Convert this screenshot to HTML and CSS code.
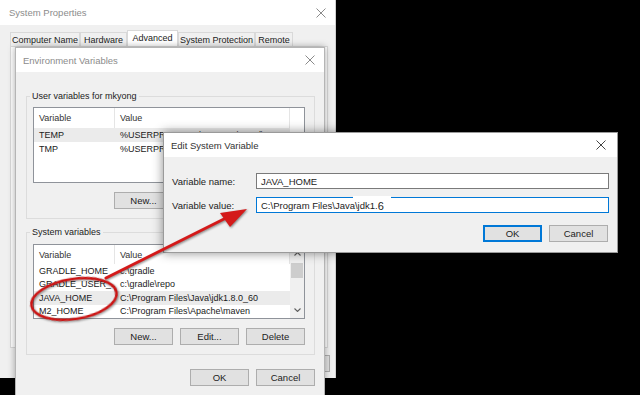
FILE: index.html
```html
<!DOCTYPE html>
<html>
<head>
<meta charset="utf-8">
<link rel="stylesheet" href="styles.css">
</head>
<body>
<div class="desktop">

  <div class="win sysprops">
    <div class="titlebar">
      <span class="title">System Properties</span>
      <svg class="close" width="10" height="10" viewBox="0 0 10 10"><path d="M0.5 0.5 L9.5 9.5 M9.5 0.5 L0.5 9.5" /></svg>
    </div>
    <div class="tabs">
      <div class="tab w-cn">Computer Name</div>
      <div class="tab w-hw">Hardware</div>
      <div class="tab active w-adv">Advanced</div>
      <div class="tab w-sp">System Protection</div>
      <div class="tab w-rm">Remote</div>
    </div>
    <div class="panel"></div>
    <div class="btnrow sp-btns">
      <div class="btn">OK</div>
      <div class="btn">Cancel</div>
      <div class="btn">Apply</div>
    </div>
  </div>

  <div class="win envvars">
    <div class="titlebar">
      <span class="title">Environment Variables</span>
      <svg class="close" width="10" height="10" viewBox="0 0 10 10"><path d="M0.5 0.5 L9.5 9.5 M9.5 0.5 L0.5 9.5" /></svg>
    </div>
    <div class="env-body">
      <fieldset class="group user-group">
        <legend>User variables for mkyong</legend>
        <div class="list">
          <div class="cols">
            <div class="row hdr"><span class="c1">Variable</span><span class="c2">Value</span></div>
            <div class="row sel"><span class="c1">TEMP</span><span class="c2">%USERPROFILE%\AppData\Local\Temp</span></div>
            <div class="row"><span class="c1">TMP</span><span class="c2">%USERPROFILE%\AppData\Local\Temp</span></div>
          </div>
          <div class="gutter"></div>
        </div>
        <div class="btnrow grp-btns">
          <div class="btn">New...</div>
          <div class="btn">Edit...</div>
          <div class="btn">Delete</div>
        </div>
      </fieldset>

      <fieldset class="group sys-group">
        <legend>System variables</legend>
        <div class="list sys-list">
          <div class="cols">
            <div class="row hdr"><span class="c1">Variable</span><span class="c2">Value</span></div>
            <div class="row"><span class="c1">GRADLE_HOME</span><span class="c2">c:\gradle</span></div>
            <div class="row"><span class="c1">GRADLE_USER_...</span><span class="c2">c:\gradle\repo</span></div>
            <div class="row sel"><span class="c1">JAVA_HOME</span><span class="c2">C:\Program Files\Java\jdk1.8.0_60</span></div>
            <div class="row"><span class="c1">M2_HOME</span><span class="c2">C:\Program Files\Apache\maven</span></div>
          </div>
          <div class="scrollbar">
            <div class="sb-arrow"><svg width="7" height="4" viewBox="0 0 7 4"><path d="M0.5 3.5 L3.5 0.5 L6.5 3.5"/></svg></div>
            <div class="sb-thumb"></div>
            <div class="sb-track"></div>
            <div class="sb-arrow"><svg width="7" height="4" viewBox="0 0 7 4"><path d="M0.5 0.5 L3.5 3.5 L6.5 0.5"/></svg></div>
          </div>
        </div>
        <div class="btnrow grp-btns">
          <div class="btn">New...</div>
          <div class="btn">Edit...</div>
          <div class="btn">Delete</div>
        </div>
      </fieldset>

      <div class="btnrow env-btns">
        <div class="btn">OK</div>
        <div class="btn">Cancel</div>
      </div>
    </div>
  </div>

  <div class="win editvar">
    <div class="titlebar">
      <span class="title">Edit System Variable</span>
      <svg class="close" width="10" height="10" viewBox="0 0 10 10"><path d="M0.5 0.5 L9.5 9.5 M9.5 0.5 L0.5 9.5" /></svg>
    </div>
    <div class="edit-body">
      <div class="field-row">
        <span class="lbl">Variable name:</span>
        <div class="field">JAVA_HOME</div>
      </div>
      <div class="field-row">
        <span class="lbl">Variable value:</span>
        <div class="field focused">C:\Program Files\Java\jdk1.<span class="six">6</span></div>
      </div>
      <div class="btnrow edit-btns">
        <div class="btn default">OK</div>
        <div class="btn">Cancel</div>
      </div>
    </div>
  </div>

  <svg class="annot" width="640" height="395" viewBox="0 0 640 395">
    <rect x="353" y="196" width="38" height="4" fill="#ffffff"/>
    <g class="red">
      <ellipse cx="74" cy="299" rx="43" ry="20" transform="rotate(-9 74 299)" fill="none" stroke="#cc1414" stroke-width="2.6"/>
      <path d="M106 278 L228 217" fill="none" stroke="#d41a1a" stroke-width="3" stroke-linecap="round"/>
      <polygon points="247,209 220,213 230,227" fill="#d41a1a"/>
    </g>
  </svg>
</div>
</body>
</html>
```

FILE: styles.css
```css
* { box-sizing: border-box; }
html, body { margin: 0; padding: 0; }
body {
  width: 640px;
  height: 395px;
  overflow: hidden;
  background: #000;
  font-family: "Liberation Sans", Arial, sans-serif;
  font-size: 9px;
  color: #1a1a1a;
}
.desktop { position: relative; width: 640px; height: 395px; }

.win {
  position: absolute;
  background: #f0f0f0;
  display: flex;
  flex-direction: column;
}

.titlebar {
  flex: none;
  height: 25px;
  background: #fff;
  display: flex;
  align-items: center;
  justify-content: space-between;
  padding: 0 9px 0 9px;
}
.title { font-size: 9.5px; color: #8c8c8c; }
.close { stroke: #8a8a8a; stroke-width: 1; fill: none; }

/* System Properties */
.sysprops {
  left: 0; top: 0;
  width: 336px; height: 378px;
  border-right: 1px solid #d0d0d0;
}
.tabs {
  display: flex;
  align-items: flex-end;
  height: 21px;
  padding-left: 10px;
}
.tab {
  height: 14px;
  border: 1px solid #d9d9d9;
  border-bottom: none;
  background: #f0f0f0;
  font-size: 9px;
  white-space: nowrap;
  display: flex;
  align-items: center;
  justify-content: center;
  color: #222;
}
.tab.active { height: 16px; background: #fff; align-items: flex-start; padding-top: 2px; }
.w-cn { width: 70px; }
.w-hw { width: 47px; }
.w-adv { width: 51px; }
.w-sp { width: 77px; }
.w-rm { width: 38px; }
.panel {
  height: 302px;
  margin: 0 7px 0 10px;
  background: #fff;
  border: 1px solid #d9d9d9;
}
.btnrow { display: flex; justify-content: flex-end; gap: 7px; }
.sp-btns { padding: 7px 5px 0 0; }

.btn {
  width: 59px;
  height: 17px;
  background: #e1e1e1;
  border: 1px solid #adadad;
  display: flex;
  align-items: center;
  justify-content: center;
  font-size: 9.5px;
  color: #222;
}

/* Environment Variables */
.envvars {
  left: 15px; top: 47px;
  width: 310px; height: 360px;
  border: 1px solid #b5b5b5;
  box-shadow: 0 0 7px rgba(0, 0, 0, 0.35);
}
.envvars .titlebar { height: 24px; padding-left: 7px; }
.env-body {
  display: flex;
  flex-direction: column;
  padding: 19px 9px 0 10px;
}
.group {
  margin: 0;
  border: 1px solid #dcdcdc;
  padding: 5px 9px 9px 6px;
  min-width: 0;
}
.group legend {
  padding: 0 2px;
  margin-left: -3px;
  font-size: 9px;
  line-height: 11px;
  color: #222;
}
.sys-group { margin-top: 8px; padding-top: 6px; }
.grp-btns { margin-top: 9px; }
.env-btns { margin-top: 14px; padding-right: 0; }

.list {
  height: 76px;
  background: #fff;
  border: 1px solid #8f939a;
  display: flex;
  overflow: hidden;
}
.sys-list { height: 75px; }
.cols { flex: 1; display: flex; flex-direction: column; }
.gutter { width: 14px; }
.row {
  display: grid;
  grid-template-columns: 81px 175px;
  height: 14px;
  align-items: center;
  white-space: nowrap;
}
.row span { padding-left: 5px; overflow: hidden; }
.row.hdr { height: 20px; align-items: stretch; }
.row.hdr span { display: flex; align-items: center; border-right: 1px solid #e5e5e5; color: #333; }
.row.sel { background: #ebebeb; }

.scrollbar {
  width: 14px;
  background: #f0f0f0;
  display: flex;
  flex-direction: column;
}
.sb-arrow {
  height: 17px;
  display: flex;
  align-items: center;
  justify-content: center;
}
.sb-arrow svg { fill: none; stroke: #606060; stroke-width: 1.1; }
.sb-thumb { height: 15px; margin: 1px 1px 0; background: #cdcdcd; }
.sb-track { flex: 1; }

/* Edit System Variable */
.editvar {
  left: 163px; top: 132px;
  width: 455px;
  border: 1px solid #9a9a9a;
  box-shadow: 0 0 10px rgba(0, 0, 0, 0.45);
}
.editvar .titlebar { height: 24px; padding: 0 11px 0 7px; }
.editvar .title { color: #333; }
.editvar .close { stroke: #444; }
.edit-body {
  display: flex;
  flex-direction: column;
  gap: 8px;
  padding: 16px 8px 10px 8px;
}
.field-row { display: grid; grid-template-columns: 84px 1fr; align-items: center; }
.lbl { font-size: 9.5px; color: #222; }
.field {
  height: 16px;
  background: #fff;
  border: 1px solid #7a7a7a;
  padding-left: 4px;
  display: flex;
  align-items: center;
  font-size: 9.5px;
  color: #222;
}
.field.focused { border-color: #0078d7; }
.six { font-size: 11px; position: relative; top: 1px; }
.edit-btns { margin-top: 4px; padding-right: 1px; }
.btn.default { border-color: #0078d7; box-shadow: inset 0 0 0 1px #0078d7; }

/* annotation overlay */
.annot { position: absolute; left: 0; top: 0; pointer-events: none; }
.annot .red { filter: drop-shadow(1px 1px 1px rgba(0, 0, 0, 0.45)); }
```
